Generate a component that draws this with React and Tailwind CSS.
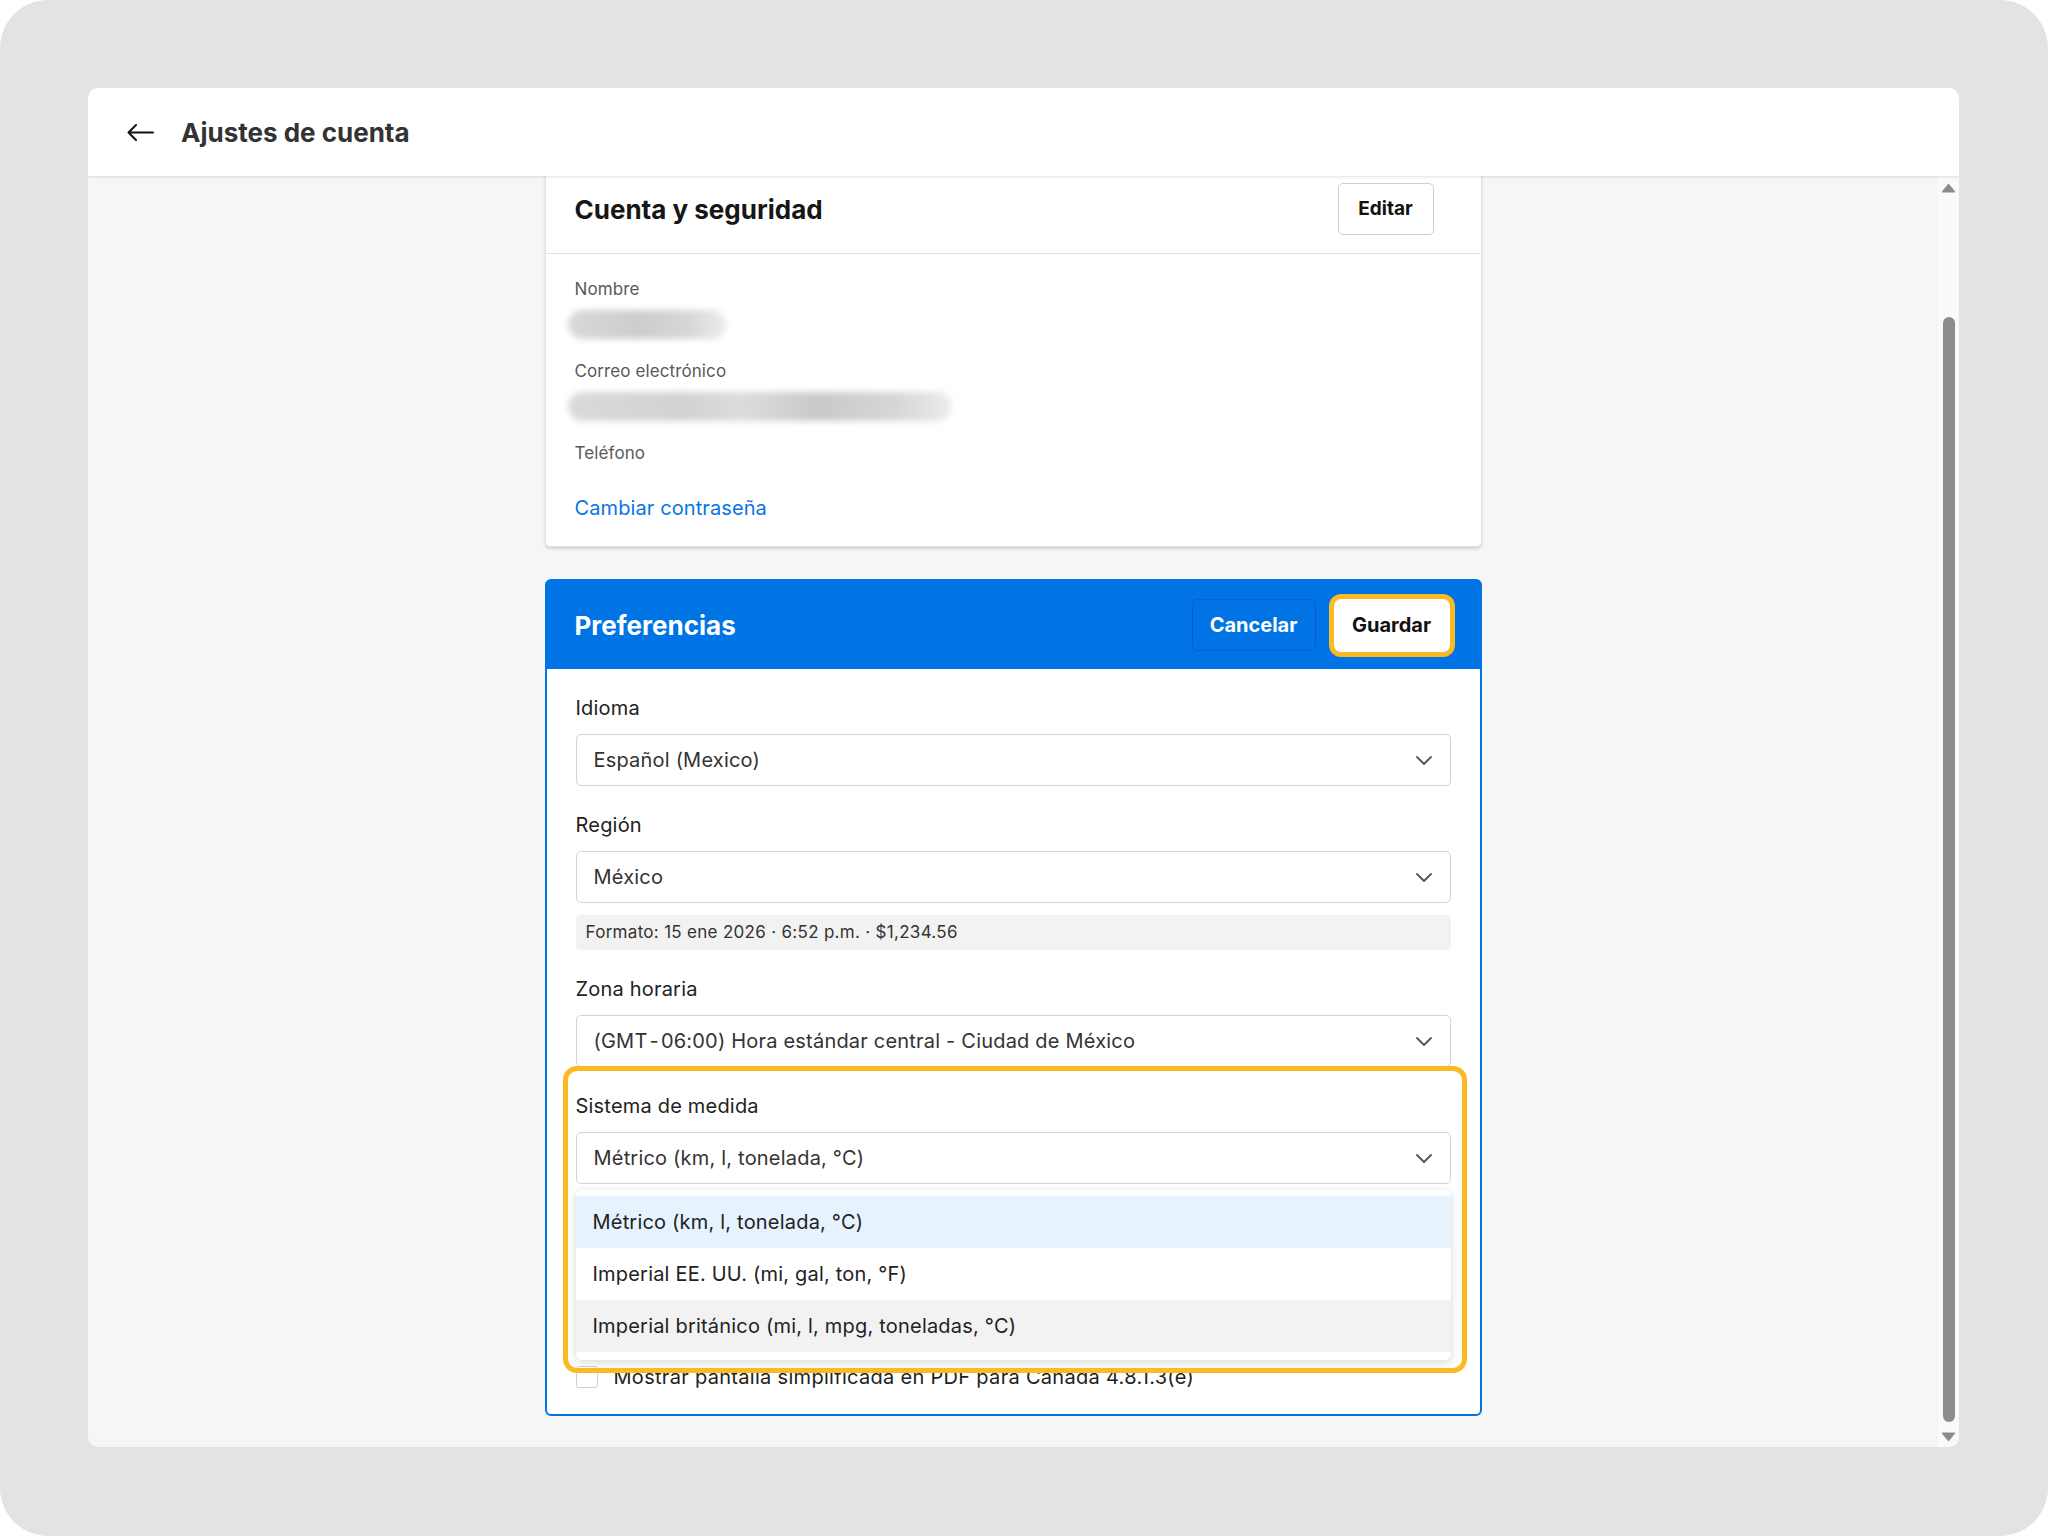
import { useState } from 'react';

const opciones = [
  'Métrico (km, l, tonelada, °C)',
  'Imperial EE. UU. (mi, gal, ton, °F)',
  'Imperial británico (mi, l, mpg, toneladas, °C)',
];

// Flecha del selector
const Chevron = () => (
  <svg width="16" height="9" viewBox="0 0 16 9" fill="none">
    <path d="M1 1l7 7 7-7" stroke="#555" strokeWidth="1.8" strokeLinecap="round" strokeLinejoin="round" />
  </svg>
);

const SelectFalso = ({ value, children, className = 'mt-[12px]' }) => (
  <div className={`relative ${className}`}>
    <div className="h-[52px] border border-[#d4d4d4] rounded-[5px] bg-white flex items-center justify-between pl-[17px] pr-[18px] text-[20px] text-[#333]">
      <span>{value}</span>
      <Chevron />
    </div>
    {children}
  </div>
);

const Campo = ({ label, children }) => (
  <div>
    <div className="text-[17px] leading-[24px] text-[#595959] tracking-[0.1px]">{label}</div>
    {children}
  </div>
);

const App = () => {
  const [medida] = useState(opciones[0]);

  return (
    <div className="w-[2048px] h-[1536px] bg-white font-['Inter',sans-serif]">
      <div className="w-full h-full rounded-[48px] bg-[#e3e3e3] pt-[88px] pl-[88px] pr-[89px] pb-[89px] flex">
        <div className="flex-1 flex flex-col rounded-[10px] overflow-hidden bg-[#f6f6f6]">
          {/* Encabezado */}
          <header className="relative z-10 h-[88px] shrink-0 bg-white flex items-center pl-[39px] shadow-[0_1px_3px_rgba(0,0,0,0.12)]">
            <svg width="27" height="17" viewBox="0 0 27 17" fill="none">
              <path d="M26 8.5H1.5M9 1L1.5 8.5 9 16" stroke="#111" strokeWidth="2" strokeLinecap="round" strokeLinejoin="round" />
            </svg>
            <h1 className="ml-[27px] text-[26px] font-bold text-[#333]">Ajustes de cuenta</h1>
          </header>

          <div className="flex-1 flex min-h-0">
            <main className="flex-1 overflow-hidden">
              <div className="w-[937px] mx-auto -mt-[12px] flex flex-col gap-[32px]">
                {/* Cuenta y seguridad */}
                <section className="bg-white border border-[#e2e2e2] rounded-[5px] shadow-[0_2px_3px_rgba(0,0,0,0.14)]">
                  <div className="h-[89px] border-b border-[#e2e2e2] flex items-center justify-between pl-[29px] pr-[47px]">
                    <h2 className="text-[26px] font-bold text-[#161616]">Cuenta y seguridad</h2>
                    <button className="w-[96px] h-[52px] border border-[#cfcfcf] rounded-[5px] text-[19px] font-bold text-[#111]">
                      Editar
                    </button>
                  </div>
                  <div className="pl-[29px] pt-[23px] pb-[24px]">
                    <Campo label="Nombre">
                      <div className="mt-[9px] mb-[20px] -ml-[7px] h-[29px] w-[158px] rounded-full blur-[3px] bg-[linear-gradient(90deg,#d8d8d8,#cdcdcd_45%,#d6d6d6_75%,#ececec)]" />
                    </Campo>
                    <Campo label="Correo electrónico">
                      <div className="mt-[9px] mb-[20px] -ml-[7px] h-[29px] w-[384px] rounded-full blur-[3px] bg-[linear-gradient(90deg,#dadada,#d2d2d2_30%,#dcdcdc_45%,#c9c9c9_65%,#d6d6d6_85%,#ececec)]" />
                    </Campo>
                    <Campo label="Teléfono" />
                    <a className="block mt-[29px] text-[20px] leading-[28px] text-[#0a74e2] tracking-[0.1px]">Cambiar contraseña</a>
                  </div>
                </section>

                {/* Preferencias */}
                <section className="border-2 border-[#0074e4] rounded-[6px] bg-white">
                  <div className="h-[88px] bg-[#0074e4] flex items-center justify-between pl-[28px] pr-[30px]">
                    <h2 className="text-[26px] font-bold text-white">Preferencias</h2>
                    <div className="flex items-center gap-[18px]">
                      <button className="w-[124px] h-[52px] border border-[#0b5fc2] rounded-[5px] text-[20px] font-bold text-white">
                        Cancelar
                      </button>
                      <button className="w-[116px] h-[53px] bg-white rounded-[7px] ring-[5px] ring-[#fbb924] text-[20px] font-bold text-[#111] shadow-[0_2px_0_#9fb3c8]">
                        Guardar
                      </button>
                    </div>
                  </div>

                  <div className="relative px-[29px] pt-[25px] pb-[23px] text-[#222] tracking-[0.2px]">
                    <div className="text-[20px] leading-[28px]">Idioma</div>
                    <SelectFalso value="Español (Mexico)" />

                    <div className="mt-[25px] text-[20px] leading-[28px]">Región</div>
                    <SelectFalso value="México" className="mt-[12px]" />
                    <div className="mt-[12px] h-[35px] rounded-[4px] bg-[#f2f2f2] flex items-center pl-[10px] text-[17px] text-[#333] tracking-[0.3px]">
                      Formato: 15 ene 2026 · 6:52 p.m. · $1,234.56
                    </div>

                    <div className="mt-[25px] text-[20px] leading-[28px]">Zona horaria</div>
                    <SelectFalso value={'(GMT\u200A-\u200A06:00) Hora estándar central - Ciudad de México'} />

                    <div className="mt-[25px] text-[20px] leading-[28px]">Sistema de medida</div>
                    <SelectFalso value={medida} className="mt-[12px]">
                      {/* Lista desplegada */}
                      <ul className="absolute z-20 left-0 right-0 top-[calc(100%+6px)] bg-white rounded-[6px] pt-[6px] pb-[8px] shadow-[0_2px_8px_rgba(0,0,0,0.16)]">
                        {opciones.map((op, i) => (
                          <li
                            key={op}
                            className={`h-[52px] flex items-center pl-[17px] text-[20px] text-[#222] ${
                              i === 0 ? 'bg-[#e6f2fd]' : i === 2 ? 'bg-[#f2f2f2]' : 'bg-white'
                            }`}
                          >
                            {op}
                          </li>
                        ))}
                      </ul>
                    </SelectFalso>

                    <label className="mt-[179px] h-[28px] flex items-center gap-[16px] text-[20px] text-[#222] tracking-[0.3px]">
                      <span className="w-[22px] h-[22px] border border-[#cfcfcf] rounded-[3px] bg-white" />
                      Mostrar pantalla simplificada en PDF para Canadá 4.8.1.3(e)
                    </label>

                    {/* Marco de resaltado */}
                    <div className="absolute z-30 left-[16px] top-[397px] w-[904px] h-[307px] border-[5px] border-[#fbb924] rounded-[14px] pointer-events-none" />
                  </div>
                </section>
              </div>
            </main>

            {/* Barra de desplazamiento */}
            <div className="w-[21px] shrink-0 bg-[#fafafa] flex flex-col items-center pt-[7px] pb-[5px]">
              <svg width="15" height="10" viewBox="0 0 15 10">
                <path d="M7.5 1L14 9H1z" fill="#8c8c8c" stroke="#8c8c8c" strokeLinejoin="round" />
              </svg>
              <div className="mt-[124px] flex-1 w-[12px] rounded-full bg-[#8c8c8c]" />
              <svg className="mt-[10px]" width="15" height="10" viewBox="0 0 15 10">
                <path d="M7.5 9L14 1H1z" fill="#8c8c8c" stroke="#8c8c8c" strokeLinejoin="round" />
              </svg>
            </div>
          </div>
        </div>
      </div>
    </div>
  );
};

export default App;
